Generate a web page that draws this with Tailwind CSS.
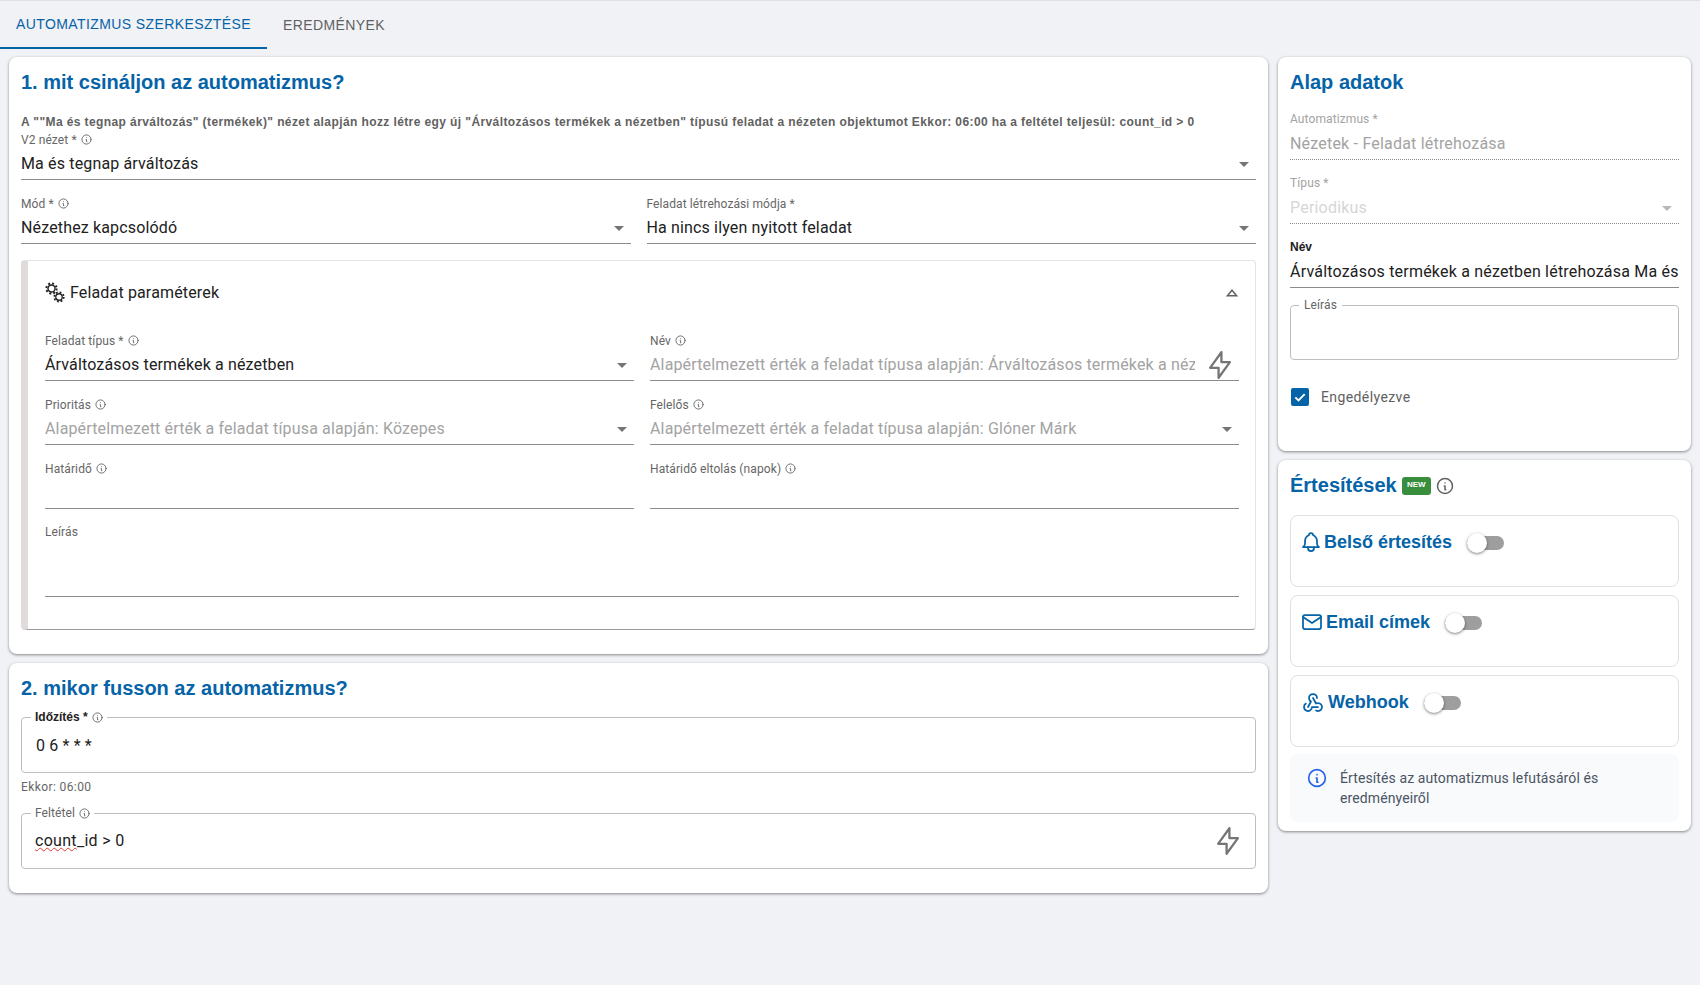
<!DOCTYPE html>
<html lang="hu">
<head>
    <meta charset="UTF-8">
    <title>Automatizmus szerkesztése</title>
    <script src="https://cdn.jsdelivr.net/npm/@tailwindcss/browser@4"></script>
</head>
<body class="bg-[#f0f2f6] font-['Roboto',sans-serif] text-[#212121] h-[985px] overflow-hidden">
    <svg class="hidden">
        <symbol id="info" viewBox="0 0 24 24" fill="none" stroke="currentColor" stroke-width="2" stroke-linecap="round" stroke-linejoin="round">
            <circle cx="12" cy="12" r="10"/><path d="M12 8h.01M11 12h1v5h1"/>
        </symbol>
        <symbol id="arrow" viewBox="0 0 24 24" fill="#757575"><path d="M7 10l5 5 5-5z"/></symbol>
        <symbol id="bolt" viewBox="0 0 24 24" fill="none" stroke="#757575" stroke-width="1.6" stroke-linecap="round" stroke-linejoin="round">
            <path d="M13 3v7h6l-8 11v-7H5l8-11"/>
        </symbol>
        <symbol id="gear" viewBox="0 0 24 24" fill="none" stroke="#212121">
            <circle cx="12" cy="12" r="6.5" stroke-width="2.6"/>
            <circle cx="12" cy="12" r="9.5" stroke-width="3.5" stroke-dasharray="3.7 3.76"/>
        </symbol>
    </svg>

    <div class="border-t border-[#dfe1e5] h-[48px] flex text-sm font-['Liberation_Sans',sans-serif] tracking-[0.4px]">
        <div class="w-[267px] h-[48px] flex items-center justify-center text-[#0563a8] border-b-2 border-[#0563a8] pb-[1px]">AUTOMATIZMUS SZERKESZTÉSE</div>
        <div class="px-4 h-[48px] flex items-center text-[#616161] pb-[1px]">EREDMÉNYEK</div>
    </div>

    <div class="flex items-start gap-[10px] pl-[9px] pr-[9px] pt-[9px]">
        <!-- bal oszlop -->
        <div class="w-[1259px] flex flex-col gap-[9px]">
            <div class="bg-white rounded-lg shadow-[0_1px_3px_rgba(0,0,0,0.45)] px-[12px] pt-[11px] pb-[24px]">
                <h2 class="text-xl leading-7 font-bold text-[#0563a8] font-['Liberation_Sans',sans-serif]">1. mit csináljon az automatizmus?</h2>
                <p class="mt-[17px] h-[18px] leading-[18px] text-xs font-bold text-[#616161] tracking-[0.4px] whitespace-nowrap font-['Liberation_Sans',sans-serif]">A ""Ma és tegnap árváltozás" (termékek)" nézet alapján hozz létre egy új "Árváltozásos termékek a nézetben" típusú feladat a nézeten objektumot Ekkor: 06:00 ha a feltétel teljesül: count_id &gt; 0</p>
                <div>
                    <div class="flex items-center gap-1 h-[17px] text-xs tracking-[0.1px] text-[#666]">V2 nézet * <svg class="w-[11px] h-[11px]"><use href="#info"/></svg></div>
                    <div class="flex items-center justify-between h-8 border-b border-[#8c8c8c] tracking-[0.15px]">Ma és tegnap árváltozás <svg class="w-6 h-6"><use href="#arrow"/></svg></div>
                </div>
                <div class="grid grid-cols-2 gap-x-[16px] mt-[15px]">
                    <div>
                        <div class="flex items-center gap-1 h-[17px] text-xs tracking-[0.1px] text-[#666]">Mód * <svg class="w-[11px] h-[11px]"><use href="#info"/></svg></div>
                        <div class="flex items-center justify-between h-8 border-b border-[#8c8c8c] tracking-[0.15px]">Nézethez kapcsolódó <svg class="w-6 h-6"><use href="#arrow"/></svg></div>
                    </div>
                    <div>
                        <div class="flex items-center gap-1 h-[17px] text-xs tracking-[0.1px] text-[#666]">Feladat létrehozási módja *</div>
                        <div class="flex items-center justify-between h-8 border-b border-[#8c8c8c] tracking-[0.15px]">Ha nincs ilyen nyitott feladat <svg class="w-6 h-6"><use href="#arrow"/></svg></div>
                    </div>
                </div>

                <div class="mt-4 h-[370px] border border-[#e3e3e3] border-l-[7px] border-l-[#e0dcdc] border-b-[#9a9a9a] rounded pl-[17px] pr-[16px]">
                    <div class="h-[71px] pb-[7px] flex items-center justify-between pr-[1px]">
                        <div class="flex items-center">
                            <span class="relative w-[22px] h-[22px] mr-[3px]">
                                <svg class="absolute left-0 top-0 w-[13px] h-[13px]"><use href="#gear"/></svg>
                                <svg class="absolute left-[8px] top-[9px] w-[12px] h-[12px]"><use href="#gear"/></svg>
                            </span>
                            <span class="tracking-[0.15px]">Feladat paraméterek</span>
                        </div>
                        <svg class="w-3 h-2" viewBox="0 0 12 8" fill="none" stroke="#616161" stroke-width="1.5"><path d="M6 1.2L10.6 6.8H1.4z"/></svg>
                    </div>
                    <div class="grid grid-cols-2 gap-x-4 gap-y-[15px]">
                        <div>
                            <div class="flex items-center gap-1 h-[17px] text-xs tracking-[0.1px] text-[#666]">Feladat típus * <svg class="w-[11px] h-[11px]"><use href="#info"/></svg></div>
                            <div class="flex items-center justify-between h-8 border-b border-[#8c8c8c] tracking-[0.15px]">Árváltozásos termékek a nézetben <svg class="w-6 h-6"><use href="#arrow"/></svg></div>
                        </div>
                        <div>
                            <div class="flex items-center gap-1 h-[17px] text-xs tracking-[0.1px] text-[#666]">Név <svg class="w-[11px] h-[11px]"><use href="#info"/></svg></div>
                            <div class="flex items-center justify-between h-8 border-b border-[#8c8c8c] tracking-[0.15px] text-[#a3a3a3]">
                                <span class="w-[545px] overflow-hidden whitespace-nowrap">Alapértelmezett érték a feladat típusa alapján: Árváltozásos termékek a nézetben</span>
                                <svg class="w-[34px] h-[34px] -my-1 mr-[2px] shrink-0"><use href="#bolt"/></svg>
                            </div>
                        </div>
                        <div>
                            <div class="flex items-center gap-1 h-[17px] text-xs tracking-[0.1px] text-[#666]">Prioritás <svg class="w-[11px] h-[11px]"><use href="#info"/></svg></div>
                            <div class="flex items-center justify-between h-8 border-b border-[#8c8c8c] tracking-[0.15px] text-[#a3a3a3]">Alapértelmezett érték a feladat típusa alapján: Közepes <svg class="w-6 h-6"><use href="#arrow"/></svg></div>
                        </div>
                        <div>
                            <div class="flex items-center gap-1 h-[17px] text-xs tracking-[0.1px] text-[#666]">Felelős <svg class="w-[11px] h-[11px]"><use href="#info"/></svg></div>
                            <div class="flex items-center justify-between h-8 border-b border-[#8c8c8c] tracking-[0.15px] text-[#a3a3a3]">Alapértelmezett érték a feladat típusa alapján: Glóner Márk <svg class="w-6 h-6"><use href="#arrow"/></svg></div>
                        </div>
                        <div>
                            <div class="flex items-center gap-1 h-[17px] text-xs tracking-[0.1px] text-[#666]">Határidő <svg class="w-[11px] h-[11px]"><use href="#info"/></svg></div>
                            <div class="h-8 border-b border-[#8c8c8c]"></div>
                        </div>
                        <div>
                            <div class="flex items-center gap-1 h-[17px] text-xs tracking-[0.1px] text-[#666]">Határidő eltolás (napok) <svg class="w-[11px] h-[11px]"><use href="#info"/></svg></div>
                            <div class="h-8 border-b border-[#8c8c8c]"></div>
                        </div>
                        <div class="col-span-2">
                            <div class="h-[17px] text-xs leading-4 tracking-[0.1px] text-[#666]">Leírás</div>
                            <div class="h-[56px] border-b border-[#8c8c8c]"></div>
                        </div>
                    </div>
                </div>
            </div>

            <div class="bg-white rounded-lg shadow-[0_1px_3px_rgba(0,0,0,0.45)] px-[12px] pt-[11px] pb-[24px]">
                <h2 class="text-xl leading-7 font-bold text-[#0563a8] font-['Liberation_Sans',sans-serif]">2. mikor fusson az automatizmus?</h2>
                <fieldset class="mt-[7px] h-[64px] border border-[#bdbdbd] rounded px-[14px]">
                    <legend class="ml-[-5px] px-1 h-4 flex items-center gap-1 text-xs font-bold text-[#212121] font-['Liberation_Sans',sans-serif]">Időzítés * <svg class="w-[11px] h-[11px] text-[#666]"><use href="#info"/></svg></legend>
                    <div class="pt-[11px] leading-5 tracking-[0.15px]">0 6 * * *</div>
                </fieldset>
                <div class="h-4 mt-[6px] text-xs leading-4 text-[#666] tracking-[0.4px]">Ekkor: 06:00</div>
                <fieldset class="mt-[10px] h-[64px] border border-[#bdbdbd] rounded pl-[13px] pr-[10px]">
                    <legend class="ml-[-4px] px-1 h-4 flex items-center gap-1 text-xs tracking-[0.1px] text-[#666]">Feltétel <svg class="w-[11px] h-[11px]"><use href="#info"/></svg></legend>
                    <div class="flex items-center justify-between h-[40px] tracking-[0.3px]">
                        <span><span class="underline decoration-wavy decoration-[#e53935] decoration-1">count</span>_id &gt; 0</span>
                        <svg class="w-[34px] h-[34px] shrink-0"><use href="#bolt"/></svg>
                    </div>
                </fieldset>
            </div>
        </div>

        <!-- jobb oszlop -->
        <div class="w-[413px] flex flex-col gap-[9px]">
            <div class="bg-white rounded-lg shadow-[0_1px_3px_rgba(0,0,0,0.45)] h-[394px] px-[12px] pt-[11px]">
                <h2 class="text-xl leading-7 font-bold text-[#0563a8] font-['Liberation_Sans',sans-serif]">Alap adatok</h2>
                <div class="mt-[15px]">
                    <div class="h-[17px] text-xs leading-4 tracking-[0.1px] text-[#a3a3a3]">Automatizmus *</div>
                    <div class="flex items-center h-8 border-b border-dotted border-[#8c8c8c] tracking-[0.2px] text-[#a3a3a3]">Nézetek - Feladat létrehozása</div>
                </div>
                <div class="mt-[15px]">
                    <div class="h-[17px] text-xs leading-4 tracking-[0.1px] text-[#a3a3a3]">Típus *</div>
                    <div class="flex items-center justify-between h-8 border-b border-dotted border-[#8c8c8c] tracking-[0.2px] text-[#d6d6d6]">Periodikus <svg class="w-6 h-6 opacity-50"><use href="#arrow"/></svg></div>
                </div>
                <div class="mt-[15px]">
                    <div class="h-[17px] text-xs leading-4 font-bold text-[#212121] font-['Liberation_Sans',sans-serif]">Név</div>
                    <div class="flex items-center h-8 border-b border-[#8c8c8c] tracking-[0.2px] whitespace-nowrap overflow-hidden">Árváltozásos termékek a nézetben létrehozása Ma és tegnap árváltozás</div>
                </div>
                <fieldset class="mt-[9px] h-[63px] border border-[#bdbdbd] rounded px-[8px]">
                    <legend class="px-[5px] h-4 text-xs leading-4 tracking-[0.1px] text-[#666]">Leírás</legend>
                </fieldset>
                <div class="mt-[27px] flex items-center gap-[12px] text-sm tracking-[0.4px] text-[#616161]">
                    <span class="w-[18px] h-[18px] rounded-[2px] bg-[#0563a8] flex items-center justify-center ml-[1px]">
                        <svg class="w-[14px] h-[14px]" viewBox="0 0 24 24" fill="none" stroke="white" stroke-width="3.2"><path d="M4 12.5l5.5 5.5L20 7"/></svg>
                    </span>
                    Engedélyezve
                </div>
            </div>

            <div class="bg-white rounded-lg shadow-[0_1px_3px_rgba(0,0,0,0.45)] h-[371px] px-[12px] pt-[11px]">
                <div class="flex items-center h-7">
                    <h2 class="text-xl leading-7 font-bold text-[#0563a8] font-['Liberation_Sans',sans-serif]">Értesítések</h2>
                    <span class="ml-[5px] w-[29px] h-[18px] mt-[2px] rounded-[3px] bg-[#388e3c] text-white text-[8px] font-bold leading-[16px] text-center font-['Liberation_Sans',sans-serif]">NEW</span>
                    <svg class="ml-[5px] w-[18px] h-[18px] mt-[2px] text-[#616161]"><use href="#info"/></svg>
                </div>
                <div class="mt-[16px] flex flex-col gap-2">
                    <div class="h-[72px] border border-[#e0e0e0] rounded-lg pl-[12px] pt-[16px]">
                        <div class="flex items-center h-[20px] text-lg font-bold text-[#0563a8] font-['Liberation_Sans',sans-serif]">
                            <svg class="w-6 h-6 -ml-[4px] mr-[1px]" viewBox="0 0 24 24" fill="none" stroke="currentColor" stroke-width="1.75" stroke-linecap="round" stroke-linejoin="round"><path d="M10 5a2 2 0 1 1 4 0a7 7 0 0 1 4 6v3a4 4 0 0 0 2 3h-16a4 4 0 0 0 2 -3v-3a7 7 0 0 1 4 -6"/><path d="M9 17v1a3 3 0 0 0 6 0v-1"/></svg>
                            Belső értesítés
                            <span class="relative ml-[15px] w-[37px] h-[14px] mt-[2px] rounded-full bg-[#9e9e9e]"><span class="absolute left-0 top-[-3px] w-5 h-5 rounded-full bg-white shadow-[0_1px_3px_rgba(0,0,0,0.5)]"></span></span>
                        </div>
                    </div>
                    <div class="h-[72px] border border-[#e0e0e0] rounded-lg pl-[12px] pt-[16px]">
                        <div class="flex items-center h-[20px] text-lg font-bold text-[#0563a8] font-['Liberation_Sans',sans-serif]">
                            <svg class="w-6 h-6 -ml-[3px] mr-[2px]" viewBox="0 0 24 24" fill="none" stroke="currentColor" stroke-width="1.75" stroke-linecap="round" stroke-linejoin="round"><rect x="3" y="5" width="18" height="14" rx="2"/><path d="M3 7l9 6l9-6"/></svg>
                            Email címek
                            <span class="relative ml-[15px] w-[37px] h-[14px] mt-[2px] rounded-full bg-[#9e9e9e]"><span class="absolute left-0 top-[-3px] w-5 h-5 rounded-full bg-white shadow-[0_1px_3px_rgba(0,0,0,0.5)]"></span></span>
                        </div>
                    </div>
                    <div class="h-[72px] border border-[#e0e0e0] rounded-lg pl-[12px] pt-[16px]">
                        <div class="flex items-center h-[20px] text-lg font-bold text-[#0563a8] font-['Liberation_Sans',sans-serif]">
                            <svg class="w-6 h-6 -ml-[2px] mr-[3px]" viewBox="0 0 24 24" fill="none" stroke="currentColor" stroke-width="1.75" stroke-linecap="round" stroke-linejoin="round"><path d="M4.876 13.61a4 4 0 1 0 6.124 3.39h6"/><path d="M15.066 20.502a4 4 0 1 0 1.934 -7.502c-.706 0 -1.424 .179 -2 .5l-3 -5.5"/><path d="M16 8a4 4 0 1 0 -8 0c0 1.506 .77 2.818 2 3.5l-3 5.5"/></svg>
                            Webhook
                            <span class="relative ml-[15px] w-[37px] h-[14px] mt-[2px] rounded-full bg-[#9e9e9e]"><span class="absolute left-0 top-[-3px] w-5 h-5 rounded-full bg-white shadow-[0_1px_3px_rgba(0,0,0,0.5)]"></span></span>
                        </div>
                    </div>
                </div>
                <div class="mt-[7px] h-[68px] rounded-lg bg-[#f8fafc] pl-[17px] pt-[14px] flex gap-[13px] text-sm leading-5 tracking-[0.1px] text-[#4b5563]">
                    <svg class="w-5 h-5 shrink-0 text-[#2563eb]"><use href="#info"/></svg>
                    <div class="w-[300px]">Értesítés az automatizmus lefutásáról és eredményeiről</div>
                </div>
            </div>
        </div>
    </div>
</body>
</html>
